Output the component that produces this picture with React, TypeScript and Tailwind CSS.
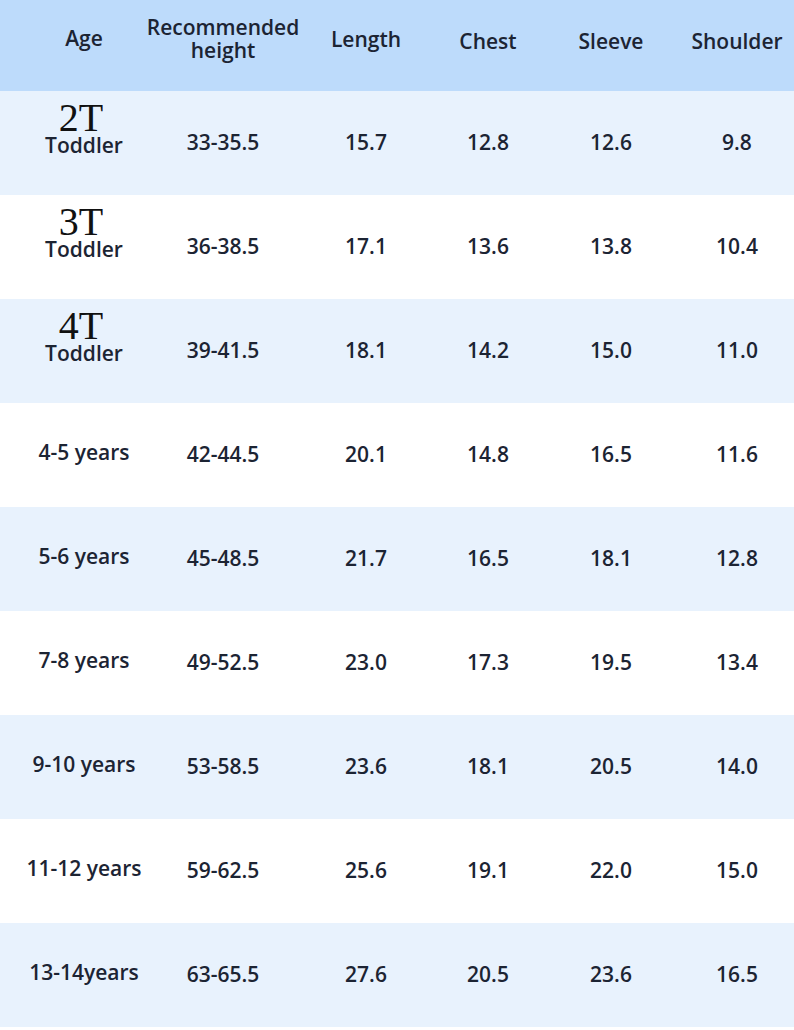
import React from 'react';

interface SizeRow {
  size?: string;
  age: string;
  height: string;
  length: string;
  chest: string;
  sleeve: string;
  shoulder: string;
}

const rows: SizeRow[] = [
  { size: '2T', age: 'Toddler', height: '33-35.5', length: '15.7', chest: '12.8', sleeve: '12.6', shoulder: '9.8' },
  { size: '3T', age: 'Toddler', height: '36-38.5', length: '17.1', chest: '13.6', sleeve: '13.8', shoulder: '10.4' },
  { size: '4T', age: 'Toddler', height: '39-41.5', length: '18.1', chest: '14.2', sleeve: '15.0', shoulder: '11.0' },
  { age: '4-5 years', height: '42-44.5', length: '20.1', chest: '14.8', sleeve: '16.5', shoulder: '11.6' },
  { age: '5-6 years', height: '45-48.5', length: '21.7', chest: '16.5', sleeve: '18.1', shoulder: '12.8' },
  { age: '7-8 years', height: '49-52.5', length: '23.0', chest: '17.3', sleeve: '19.5', shoulder: '13.4' },
  { age: '9-10 years', height: '53-58.5', length: '23.6', chest: '18.1', sleeve: '20.5', shoulder: '14.0' },
  { age: '11-12 years', height: '59-62.5', length: '25.6', chest: '19.1', sleeve: '22.0', shoulder: '15.0' },
  { age: '13-14years', height: '63-65.5', length: '27.6', chest: '20.5', sleeve: '23.6', shoulder: '16.5' },
];

const grid = 'grid grid-cols-[168px_110px_176px_68px_178px_74px_1fr]';
const cell = 'flex items-center justify-center whitespace-nowrap';

export default function App() {
  return (
    <div className="w-[794px] h-[1030px] bg-white text-[#1c2433] font-['Open_Sans',sans-serif] font-semibold overflow-hidden">
      <div className={`${grid} h-[91px] bg-[#bddbfb] text-[21px] leading-[23px]`}>
        <div className={`${cell} pb-[15px]`}>Age</div>
        <div className={`${cell} flex-col pb-[14px]`}>
          <span>Recommended</span>
          <span>height</span>
        </div>
        <div className={`${cell} pb-[12px]`}>Length</div>
        <div className={`${cell} pb-[8px]`}>Chest</div>
        <div className={`${cell} pb-[8px]`}>Sleeve</div>
        <div className={`${cell} pb-[8px]`}>Shoulder</div>
        <div />
      </div>
      {rows.map((row, i) => (
        <div
          key={i}
          className={`${grid} h-[104px] text-[21px] ${i % 2 === 0 ? 'bg-[#e8f2fd]' : 'bg-white'}`}
        >
          {row.size ? (
            <div className="flex flex-col items-center pt-[12px]">
              <span className="pr-[6px] font-['Liberation_Serif',serif] font-normal text-[40px] leading-[30px] text-[#111]">
                {row.size}
              </span>
              <span className="leading-[24px]">{row.age}</span>
            </div>
          ) : (
            <div className={`${cell} pb-[5px]`}>{row.age}</div>
          )}
          <div className={cell}>{row.height}</div>
          <div className={cell}>{row.length}</div>
          <div className={cell}>{row.chest}</div>
          <div className={cell}>{row.sleeve}</div>
          <div className={cell}>{row.shoulder}</div>
          <div />
        </div>
      ))}
    </div>
  );
}
